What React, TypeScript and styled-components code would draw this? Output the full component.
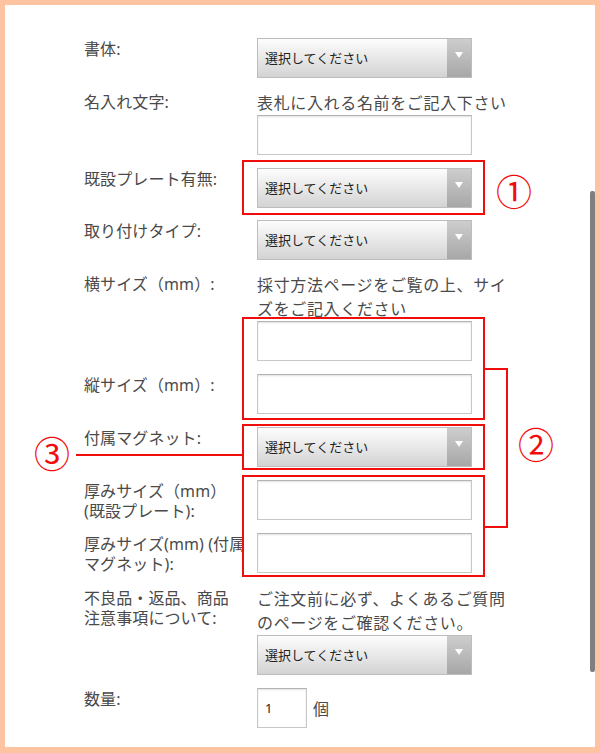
import React from "react";
import styled, { createGlobalStyle } from "styled-components";

const GlobalStyle = createGlobalStyle`
  html, body {
    margin: 0;
    padding: 0;
    background: #fec3a0;
  }
  body {
    font-family: "Noto Sans", "Noto Sans CJK JP", sans-serif;
  }
`;

const Frame = styled.div`
  position: relative;
  width: 600px;
  height: 753px;
  box-sizing: border-box;
  border: 5px solid #fec3a0;
  border-bottom-width: 6px;
  background: #ffffff;
  overflow: hidden;
`;

const Form = styled.div`
  display: flex;
  flex-direction: column;
  gap: 12.8px;
  padding: 33px 0 0 79px;
`;

const Row = styled.div`
  display: grid;
  grid-template-columns: 160px 260px;
  column-gap: 13px;
  align-items: start;
`;

const Label = styled.div`
  padding-top: 1px;
  font-size: 16px;
  line-height: 20px;
  letter-spacing: 0.1px;
  color: #4a4a4a;
  white-space: nowrap;
`;

const Field = styled.div`
  display: flex;
  flex-direction: column;
  align-items: flex-start;
`;

const Note = styled.div`
  font-size: 16px;
  line-height: 24px;
  letter-spacing: 0.65px;
  color: #4a4a4a;
  white-space: nowrap;
`;

const SelectBox = styled.div`
  display: flex;
  width: 215px;
  height: 40px;
  box-sizing: border-box;
  border: 1px solid #bdbdbd;
  background: linear-gradient(#fdfdfd, #d3d3d3);
`;

const SelectText = styled.span`
  flex: 1;
  padding-left: 7px;
  font-size: 13px;
  line-height: 38px;
  color: #222222;
`;

const SelectArrow = styled.span`
  display: flex;
  justify-content: center;
  width: 24px;
  padding-top: 13px;
  box-sizing: border-box;
  background: linear-gradient(#cdcdcd, #a7a7a7);

  &::after {
    content: "";
    height: 0;
    border-left: 4px solid transparent;
    border-right: 4px solid transparent;
    border-top: 6px solid #ffffff;
  }
`;

const TextInput = styled.input<{ $w?: number }>`
  width: ${({ $w }) => $w ?? 215}px;
  height: 40px;
  margin: 0;
  padding: 0 7px;
  box-sizing: border-box;
  border: 1px solid #c8c8c8;
  border-top-color: #b3b3b3;
  box-shadow: inset 0 1px 2px rgba(0, 0, 0, 0.12);
  background: #ffffff;
  font: 13px "Noto Sans", sans-serif;
  color: #222222;
  outline: none;
`;

const Qty = styled.div`
  display: flex;
  align-items: center;
  gap: 6px;
  font-size: 16px;
  color: #4a4a4a;
`;

const Scrollbar = styled.div`
  position: absolute;
  right: 0;
  top: 186px;
  width: 5px;
  height: 481px;
  border-radius: 2px;
  background: #7f7f7f;
`;

const Mark = styled.div<{ $x: number; $y: number; $w: number; $h: number }>`
  position: absolute;
  left: ${({ $x }) => $x}px;
  top: ${({ $y }) => $y}px;
  width: ${({ $w }) => $w}px;
  height: ${({ $h }) => $h}px;
  box-sizing: border-box;
  border: 2px solid #f20d0d;
  pointer-events: none;
`;

const Bracket = styled(Mark)`
  border-left: none;
`;

const Line = styled.div<{ $x: number; $y: number; $w: number }>`
  position: absolute;
  left: ${({ $x }) => $x}px;
  top: ${({ $y }) => $y}px;
  width: ${({ $w }) => $w}px;
  height: 2px;
  background: #f20d0d;
`;

const Num = styled.div<{ $x: number; $y: number }>`
  position: absolute;
  left: ${({ $x }) => $x}px;
  top: ${({ $y }) => $y}px;
  transform: translate(-50%, -50%);
  font-family: "Noto Sans CJK JP", sans-serif;
  font-size: 36px;
  line-height: 1;
  color: #f20d0d;
`;

const Select = () => (
  <SelectBox>
    <SelectText>選択してください</SelectText>
    <SelectArrow />
  </SelectBox>
);

const App = () => {
  return (
    <Frame>
      <GlobalStyle />
      <Form>
        <Row>
          <Label>書体:</Label>
          <Field>
            <Select />
          </Field>
        </Row>
        <Row>
          <Label>名入れ文字:</Label>
          <Field>
            <Note>表札に入れる名前をご記入下さい</Note>
            <TextInput type="text" />
          </Field>
        </Row>
        <Row>
          <Label>既設プレート有無:</Label>
          <Field>
            <Select />
          </Field>
        </Row>
        <Row>
          <Label>取り付けタイプ:</Label>
          <Field>
            <Select />
          </Field>
        </Row>
        <Row>
          <Label>横サイズ（mm）:</Label>
          <Field>
            <Note>
              採寸方法ページをご覧の上、サイ
              <br />
              ズをご記入ください
            </Note>
            <TextInput type="text" />
          </Field>
        </Row>
        <Row>
          <Label>縦サイズ（mm）:</Label>
          <Field>
            <TextInput type="text" />
          </Field>
        </Row>
        <Row>
          <Label>付属マグネット:</Label>
          <Field>
            <Select />
          </Field>
        </Row>
        <Row>
          <Label>
            厚みサイズ（mm）
            <br />
            (既設プレート):
          </Label>
          <Field>
            <TextInput type="text" />
          </Field>
        </Row>
        <Row>
          <Label>
            厚みサイズ(mm) (付属
            <br />
            マグネット):
          </Label>
          <Field>
            <TextInput type="text" />
          </Field>
        </Row>
        <Row>
          <Label>
            不良品・返品、商品
            <br />
            注意事項について:
          </Label>
          <Field>
            <Note>
              ご注文前に必ず、よくあるご質問
              <br />
              のページをご確認ください。
            </Note>
            <Select />
          </Field>
        </Row>
        <Row>
          <Label>数量:</Label>
          <Field>
            <Qty>
              <TextInput type="text" $w={50} defaultValue="1" />
              個
            </Qty>
          </Field>
        </Row>
      </Form>

      <Scrollbar />

      <Mark $x={237} $y={155} $w={243} $h={55} />
      <Num $x={509} $y={185}>①</Num>

      <Mark $x={237} $y={312} $w={243} $h={103} />
      <Mark $x={237} $y={470} $w={243} $h={102} />
      <Bracket $x={478} $y={363} $w={25} $h={160} />
      <Num $x={531} $y={438}>②</Num>

      <Mark $x={237} $y={419} $w={243} $h={46} />
      <Line $x={71} $y={449} $w={167} />
      <Num $x={47} $y={447}>③</Num>
    </Frame>
  );
};

export default App;
